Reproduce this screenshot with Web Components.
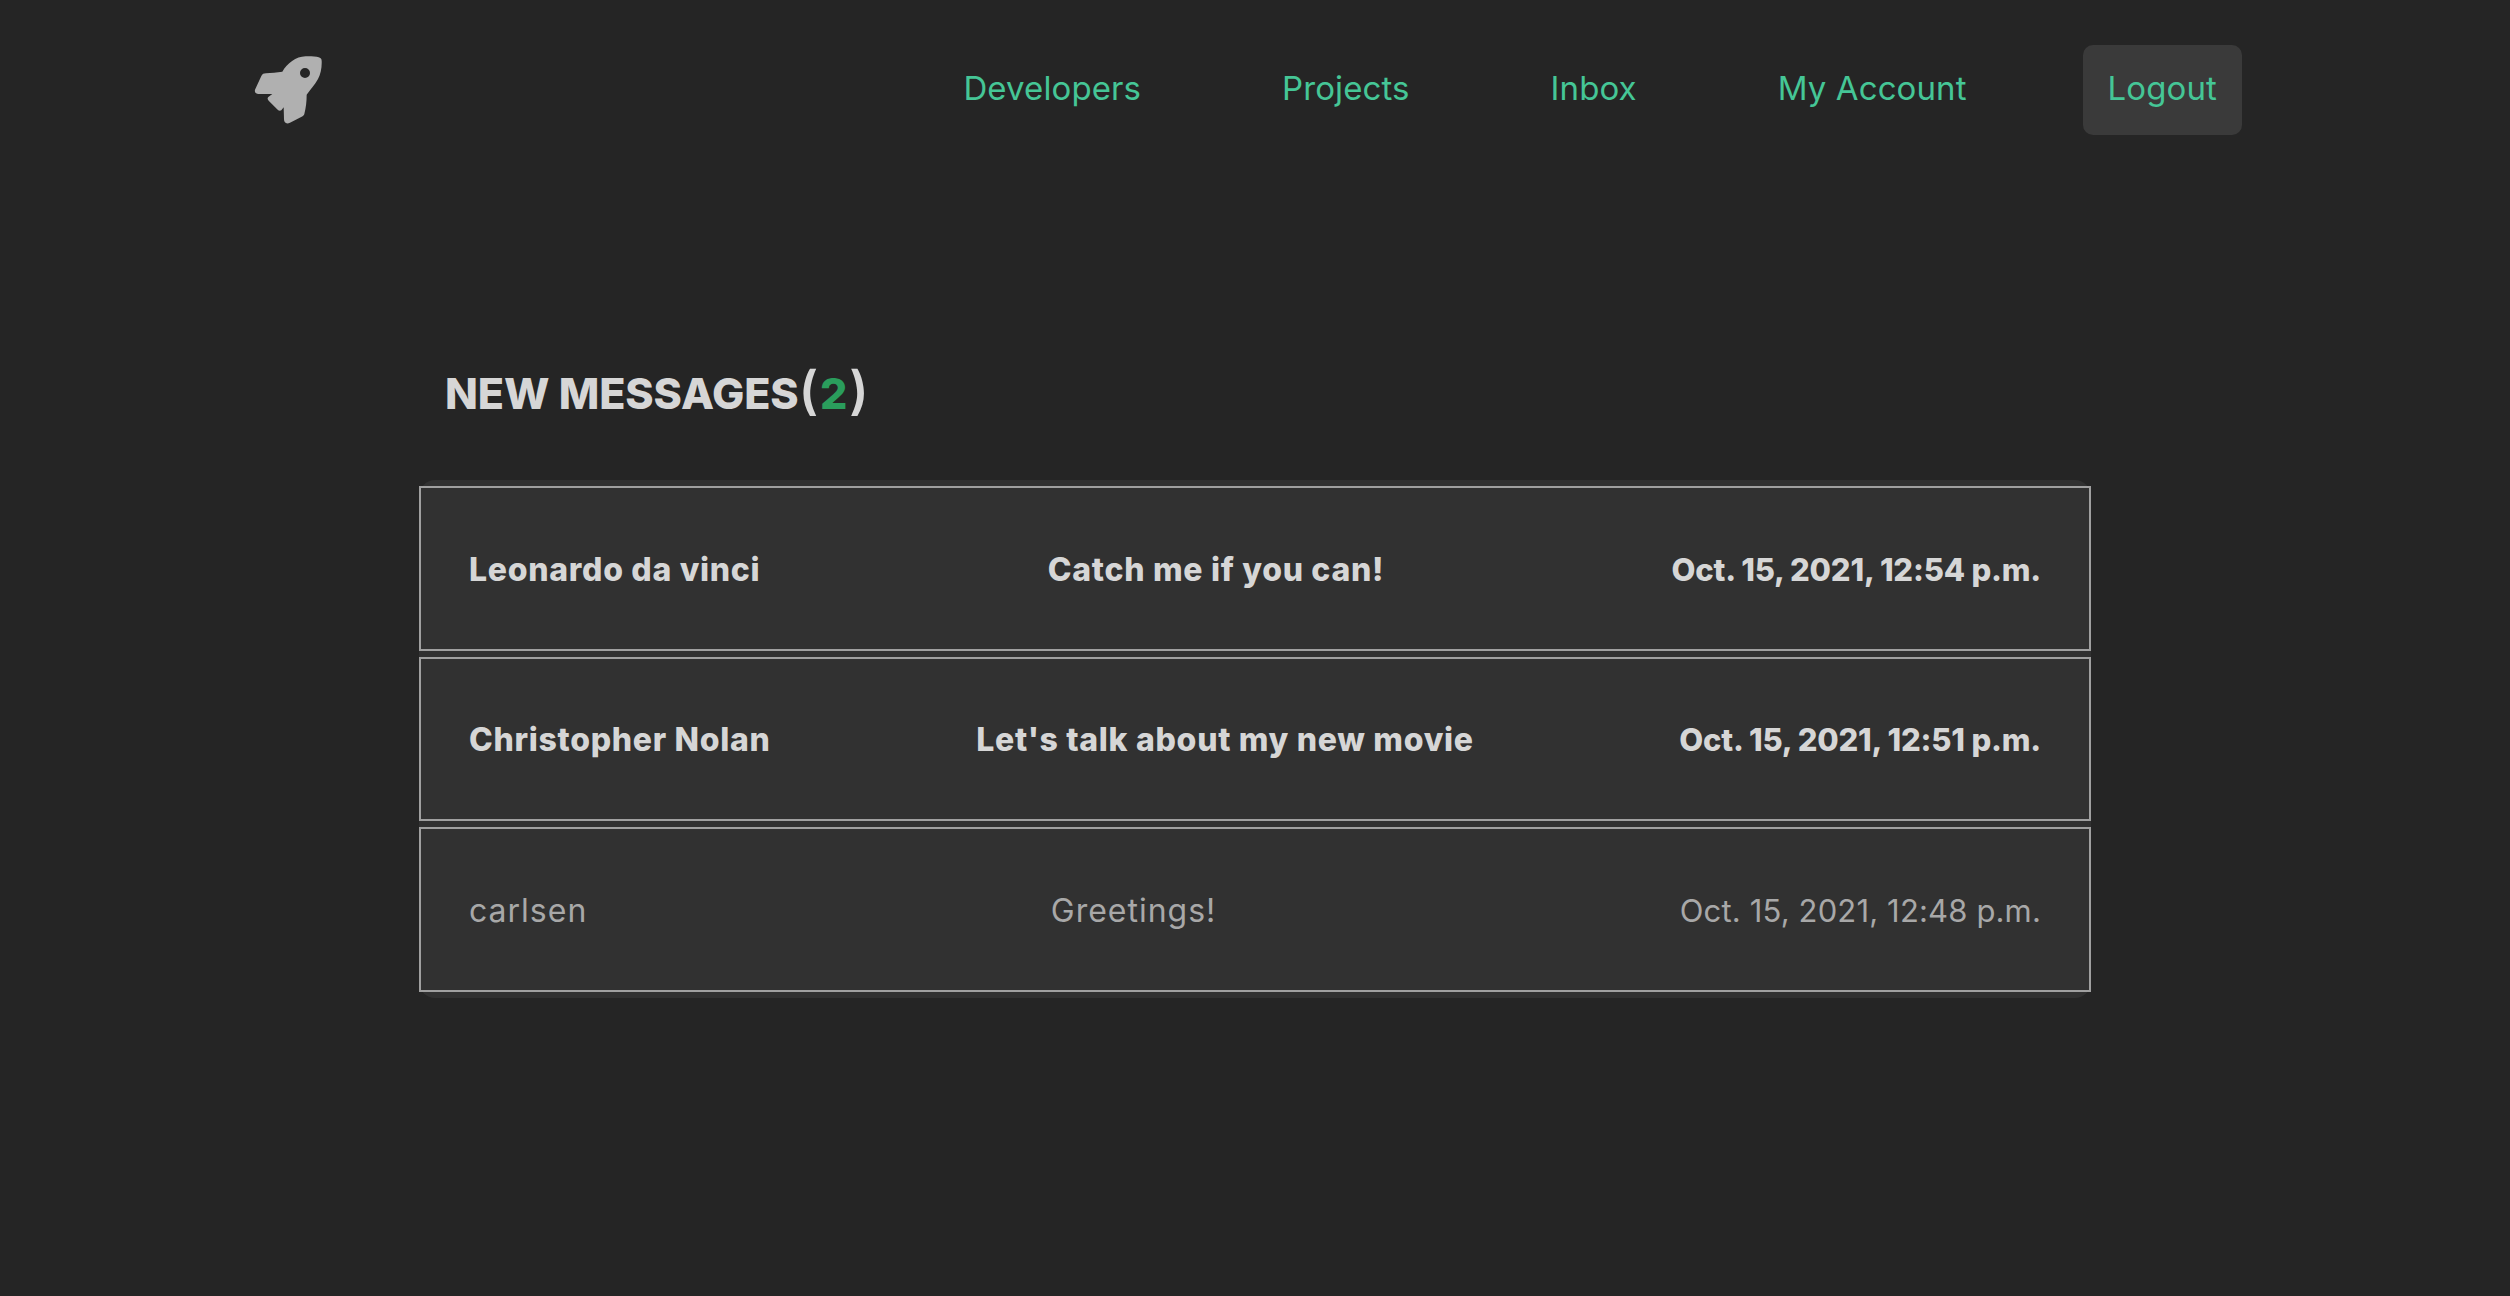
<!DOCTYPE html>
<html>
<head>
<meta charset="utf-8">
<title>Inbox</title>
<style>
    html, body { margin: 0; background: #252525; }
    body { font-family: Inter, "Noto Sans", sans-serif; color: #d4d4d4; min-height: 1296px; }
    b { color: #2a9d5c; font-weight: 800; padding: 0 2px; }
    i { font-style: normal; font-size: 52px; font-weight: 600; }
</style>
</head>
<body>

<app-nav>
    <nav-link>Developers</nav-link>
    <nav-link>Projects</nav-link>
    <nav-link>Inbox</nav-link>
    <nav-link>My Account</nav-link>
    <nav-link boxed>Logout</nav-link>
</app-nav>

<inbox-panel>
    <span slot="title">NEW MESSAGES<i>(</i><b>2</b><i>)</i></span>
    <message-row unread>
        <span slot="sender">Leonardo da vinci</span>
        <span slot="subject">Catch me if you can!</span>
        <span slot="date">Oct. 15, 2021, 12:54 p.m.</span>
    </message-row>
    <message-row unread>
        <span slot="sender">Christopher Nolan</span>
        <span slot="subject">Let's talk about my new movie</span>
        <span slot="date">Oct. 15, 2021, 12:51 p.m.</span>
    </message-row>
    <message-row>
        <span slot="sender">carlsen</span>
        <span slot="subject">Greetings!</span>
        <span slot="date">Oct. 15, 2021, 12:48 p.m.</span>
    </message-row>
</inbox-panel>

<script>
customElements.define('app-nav', class extends HTMLElement {
    constructor() {
        super()
        this.attachShadow({ mode: 'open' })
        this.shadowRoot.innerHTML = `
            <style>
                :host {
                    display: flex;
                    justify-content: space-between;
                    align-items: center;
                    padding: 45px 268px 0 254px;
                    height: 90px;
                }
                svg {
                    width: 68px;
                    height: 68px;
                    display: block;
                }
                #links {
                    display: flex;
                    align-items: center;
                    gap: 91px;
                }
            </style>
            <svg viewBox="70 78 204 204">
                <path fill="#b0b0b0" fill-rule="evenodd" d="M258 80C267 81 273 84 273 92C274 112 270 132 262 147C252 165 240 178 228 194C228 214 226 232 221 252C220 256 217 258 213 260L178 278C168 283 160 279 160 268L159 232L152 241C148 243 144 242 141 239L114 212C110 208 110 204 113 201L125 192L84 192C74 192 70 186 74 177L92 138C95 132 99 130 106 130C122 128 138 128 155 125C170 100 195 80 225 79C236 79 248 79 258 80ZM223 114A15 15 0 1 0 223 144A15 15 0 1 0 223 114Z"/>
            </svg>
            <div id="links"><slot></slot></div>
        `
    }
})

customElements.define('nav-link', class extends HTMLElement {
    constructor() {
        super()
        this.attachShadow({ mode: 'open' })
        this.shadowRoot.innerHTML = `
            <style>
                :host {
                    display: flex;
                    align-items: center;
                    height: 90px;
                    padding: 0 25px 4px;
                    box-sizing: border-box;
                    color: #45c696;
                    font-size: 33px;
                    letter-spacing: 0.1px;
                    font-weight: 400;
                    border-radius: 10px;
                }
                :host([boxed]) {
                    background: #3a3a3a;
                }
            </style>
            <slot></slot>
        `
    }
})

customElements.define('inbox-panel', class extends HTMLElement {
    constructor() {
        super()
        this.attachShadow({ mode: 'open' })
        this.shadowRoot.innerHTML = `
            <style>
                :host {
                    display: block;
                    width: 1672px;
                    margin: 0 auto;
                    padding-top: 227px;
                }
                h2 {
                    margin: 0 0 61px 26px;
                    font-size: 43px;
                    letter-spacing: -0.1px;
                    line-height: 57px;
                    height: 57px;
                    font-weight: 800;
                    color: #d6d6d6;
                }
                #rows {
                    display: flex;
                    flex-direction: column;
                    gap: 6px;
                    padding: 6px 0;
                    background: #313131;
                    border-radius: 16px;
                }
            </style>
            <h2><slot name="title"></slot></h2>
            <div id="rows"><slot></slot></div>
        `
    }
})

customElements.define('message-row', class extends HTMLElement {
    constructor() {
        super()
        this.attachShadow({ mode: 'open' })
        this.shadowRoot.innerHTML = `
            <style>
                :host {
                    display: flex;
                    justify-content: space-between;
                    align-items: center;
                    height: 164.67px;
                    box-sizing: border-box;
                    padding: 2px 48px 0;
                    border: 2px solid #a0a0a0;
                    font-size: 32px;
                    color: #a8a8a8;
                    background: #313131;
                    --name-spacing: 1px;
                    --date-spacing: 0.15px;
                }
                :host([unread]) {
                    color: #d6d6d6;
                    font-weight: 800;
                    --name-spacing: 0.7px;
                    --date-spacing: -0.2px;
                }
                slot[name=sender], slot[name=subject] {
                    letter-spacing: var(--name-spacing);
                }
                slot[name=date] {
                    font-size: 31px;
                    letter-spacing: var(--date-spacing);
                }
            </style>
            <slot name="sender"></slot>
            <slot name="subject"></slot>
            <slot name="date"></slot>
        `
    }
})
</script>
</body>
</html>
